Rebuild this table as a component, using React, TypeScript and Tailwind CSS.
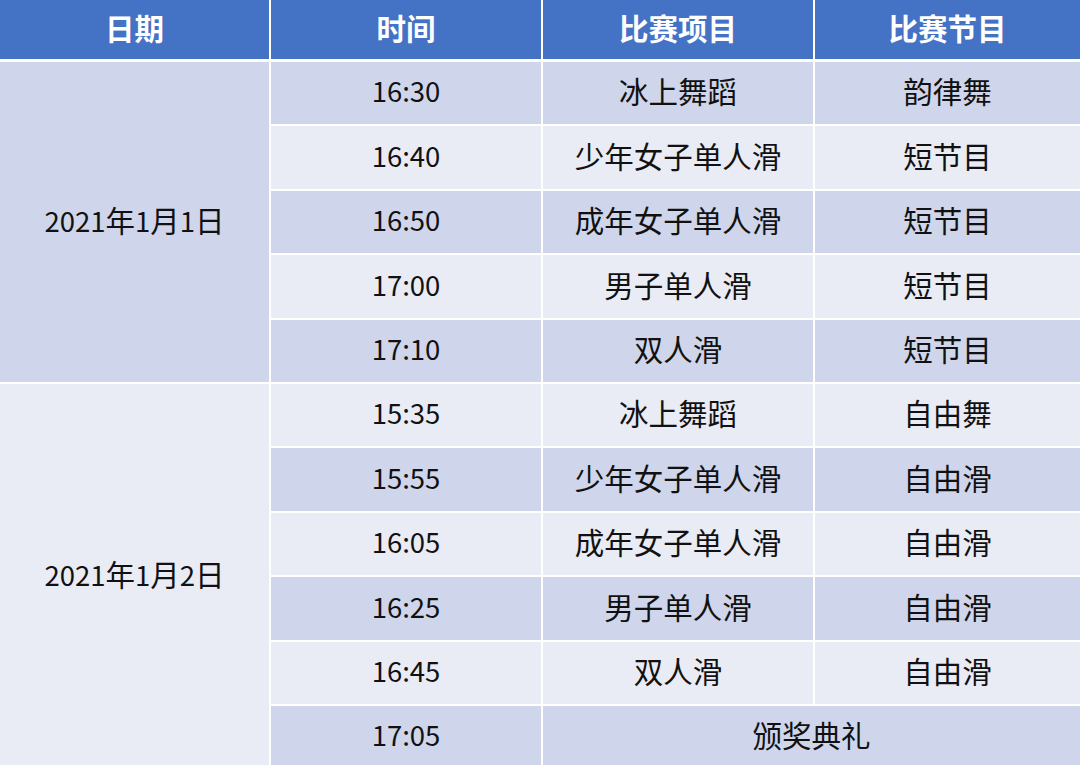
const rows = [
  { time: '16:30', event: '冰上舞蹈', program: '韵律舞' },
  { time: '16:40', event: '少年女子单人滑', program: '短节目' },
  { time: '16:50', event: '成年女子单人滑', program: '短节目' },
  { time: '17:00', event: '男子单人滑', program: '短节目' },
  { time: '17:10', event: '双人滑', program: '短节目' },
  { time: '15:35', event: '冰上舞蹈', program: '自由舞' },
  { time: '15:55', event: '少年女子单人滑', program: '自由滑' },
  { time: '16:05', event: '成年女子单人滑', program: '自由滑' },
  { time: '16:25', event: '男子单人滑', program: '自由滑' },
  { time: '16:45', event: '双人滑', program: '自由滑' },
  { time: '17:05', event: '颁奖典礼', program: null },
];

const cell = 'flex items-center justify-center pb-[4px]';

// CJK glyphs in the source render a touch wider than the digits
function Txt({ children }: { children: string }) {
  const parts = children.split(/([\u4e00-\u9fff]+)/).filter(Boolean);
  return (
    <span>
      {parts.map((p, i) =>
        /[\u4e00-\u9fff]/.test(p) ? (
          <span key={i} className="text-[29.5px]">
            {p}
          </span>
        ) : (
          <span key={i}>{p}</span>
        ),
      )}
    </span>
  );
}

export default function App() {
  return (
    <div
      className="h-[765px] w-[1080px] overflow-hidden bg-white text-[27.5px] leading-none text-[#111]"
      style={{ fontFamily: '"Noto Sans CJK SC", "Noto Sans", sans-serif' }}
    >
      <div className="grid grid-cols-[269px_270px_270px_1fr] grid-rows-[60px_repeat(11,62.4px)] gap-[2px]">
        {['日期', '时间', '比赛项目', '比赛节目'].map((h) => (
          <div key={h} className={`${cell} h-[59px] self-start bg-[#4472c4] font-bold text-white`}>
            <Txt>{h}</Txt>
          </div>
        ))}

        <div className={`${cell} row-span-5 bg-[#cfd5ea]`}>
          <Txt>2021年1月1日</Txt>
        </div>
        {rows.slice(0, 5).map((r, i) => (
          <Row key={r.time} {...r} dark={i % 2 === 0} />
        ))}

        <div className={`${cell} row-span-6 bg-[#e9ebf5]`}>
          <Txt>2021年1月2日</Txt>
        </div>
        {rows.slice(5).map((r, i) => (
          <Row key={r.time} {...r} dark={i % 2 === 1} />
        ))}
      </div>
    </div>
  );
}

function Row({ time, event, program, dark }: { time: string; event: string; program: string | null; dark: boolean }) {
  const bg = dark ? 'bg-[#cfd5ea]' : 'bg-[#e9ebf5]';
  return (
    <>
      <div className={`${cell} ${bg}`}>{time}</div>
      {program === null ? (
        <div className={`${cell} col-span-2 ${bg}`}>
          <Txt>{event}</Txt>
        </div>
      ) : (
        <>
          <div className={`${cell} ${bg}`}>
            <Txt>{event}</Txt>
          </div>
          <div className={`${cell} ${bg}`}>
            <Txt>{program}</Txt>
          </div>
        </>
      )}
    </>
  );
}
